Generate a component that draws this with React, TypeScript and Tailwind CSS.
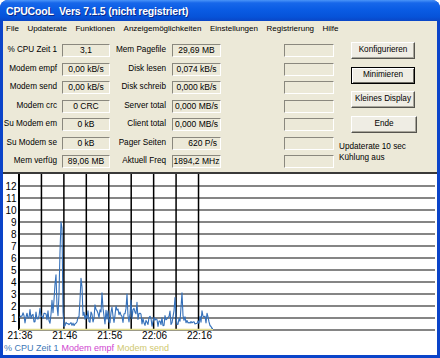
import React from "react";

function mulberry32(a: number) {
  return function () {
    a |= 0;
    a = (a + 0x6d2b79f5) | 0;
    let t = Math.imul(a ^ (a >>> 15), 1 | a);
    t = (t + Math.imul(t ^ (t >>> 7), 61 | t)) ^ t;
    return ((t ^ (t >>> 14)) >>> 0) / 4294967296;
  };
}

const rows: [string, string, string, string, boolean?][] = [
  ["% CPU Zeit 1", "3,1", "Mem Pagefile", "29,69 MB"],
  ["Modem empf", "0,00 kB/s", "Disk lesen", "0,074 kB/s"],
  ["Modem send", "0,00 kB/s", "Disk schreib", "0,000 kB/s"],
  ["Modem crc", "0 CRC", "Server total", "0,000 MB/s"],
  ["Su Modem em", "0 kB", "Client total", "0,000 MB/s"],
  ["Su Modem se", "0 kB", "Pager Seiten", "620 P/s", true],
  ["Mem verfüg", "89,06 MB", "Aktuell Freq", "1894,2 MHz"],
];

const menu = ["File", "Updaterate", "Funktionen", "Anzeigemöglichkeiten", "Einstellungen", "Registrierung", "Hilfe"];

const spikes: Record<number, number> = {
  24: 1.2, 27: 1.4, 30: 1.7, 33: 1.3, 36: 1.5, 40: 1.8, 44: 1.4, 48: 1.6,
  54: 2.5, 55: 3.8, 56: 4.6, 57: 2, 58: 1.2, 59: 3, 60: 6.5, 61: 9, 62: 8.5, 63: 1.5, 64: 0.3,
  80: 2.5, 81: 4.3, 82: 3.6, 83: 1.2, 88: 1.6, 91: 1.5, 95: 2.1, 98: 1.4, 101: 1.5, 102: 3.1, 103: 1.8,
  108: 1.6, 112: 1.9, 116: 2, 120: 1.5,
  126: 1.8, 127: 3, 128: 1.2, 131: 2.5, 134: 1.8, 137: 2.3, 140: 1.4, 174: 1.6, 175: 2.7, 176: 1.1, 181: 1.9, 182: 3.1, 183: 1.2,
  202: 1.6, 207: 1.4,
};

function buildData(): string {
  const rand = mulberry32(11);
  const pts: string[] = [];
  for (let ax = 19; ax <= 213; ax++) {
    let base: number;
    if (ax < 52) base = 0.5 + rand() * 1.1;
    else if (ax < 63) base = 1 + rand() * 1.5;
    else if (ax < 78) base = 0.35 + rand() * 0.35;
    else if (ax < 142) base = 0.5 + rand() * 1.3;
    else if (ax < 170) base = 0.3 + rand() * 0.9;
    else if (ax < 186) base = 0.4 + rand() * 1.2;
    else if (ax < 200) base = 0.5 + rand() * 0.3;
    else if (ax < 210) base = 0.5 + rand() * 0.8;
    else base = Math.max(0, (213 - ax) * 0.12 + rand() * 0.15);
    const v = spikes[ax] ?? base;
    pts.push(`${ax - 3},${(156 - 12 * v).toFixed(1)}`);
  }
  return pts.join(" ");
}

const data = buildData();

function Box({ w, children, right }: { w: string; children?: React.ReactNode; right?: boolean }) {
  return (
    <div
      className={`${w} h-[13px] border border-t-[#8a887e] border-l-[#8a887e] border-r-white border-b-white flex items-center ${
        right ? "justify-end pr-[3px]" : "justify-center"
      } text-[8.5px] leading-none whitespace-nowrap`}
    >
      {children}
    </div>
  );
}

export default function App() {
  const vlines = Array.from({ length: 9 }, (_, k) => 16 + 22.44 * k);
  const hlines = Array.from({ length: 13 }, (_, v) => 156 - 12 * v);
  const xlabels = ["21:36", "21:46", "21:56", "22:06", "22:16"];
  return (
    <div className="w-[440px] h-[358px] flex flex-col bg-[#0b44c9] rounded-t-[8px] overflow-hidden font-['Liberation_Sans',Arial,sans-serif] text-black">
      <div className="h-[21px] shrink-0 flex items-center pl-[6px] pt-[3px] bg-[linear-gradient(180deg,#4a94f8_0%,#1767ea_14%,#0a5ce4_45%,#0653d9_80%,#0a46c6_100%)]">
        <span className="text-white font-bold text-[10.5px] tracking-[-0.2px] [text-shadow:1px_1px_0_#0b2a8a]">
          CPUCooL&nbsp;&nbsp;Vers 7.1.5 (nicht registriert)
        </span>
      </div>
      <div className="flex-1 flex flex-col mx-[3px] mb-[3px] bg-[#ece9d8]">
        <div className="h-[16px] shrink-0 flex items-center gap-[8.5px] pl-[3px] text-[8px]">
          {menu.map((m) => (
            <span key={m}>{m}</span>
          ))}
        </div>
        <div className="h-[135px] shrink-0 flex items-start pt-[5px]">
          <div className="mt-[2px] flex flex-col gap-[5.5px]">
            {rows.map(([l1, v1, l2, v2, r]) => (
              <div key={l1} className="flex items-center h-[13px] text-[8.2px] leading-none">
                <div className="w-[54px] text-right whitespace-nowrap">{l1}</div>
                <div className="ml-[5px]">
                  <Box w="w-[48px]">{v1}</Box>
                </div>
                <div className="w-[56px] text-right whitespace-nowrap">{l2}</div>
                <div className="ml-[6px]">
                  <Box w="w-[49px]" right={r}>{v2}</Box>
                </div>
                <div className="ml-[63px]">
                  <Box w="w-[50px]" />
                </div>
              </div>
            ))}
          </div>
          <div className="ml-[5px] flex flex-col">
            <div className="ml-[12px] flex flex-col gap-[7.5px]">
              <button className="w-[64px] h-[17px] bg-[#efede4] border border-t-white border-l-white border-r-[#55544e] border-b-[#55544e] shadow-[inset_-1px_-1px_0_#a8a69b] text-[8.2px] leading-none flex items-center justify-center">
                Konfigurieren
              </button>
              <button className="w-[64px] h-[17px] bg-[#efede4] border border-black shadow-[inset_1px_1px_0_#fff,inset_-1px_-1px_0_#6f6e66] text-[8.2px] leading-none flex items-center justify-center">
                Minimieren
              </button>
              <button className="w-[64px] h-[17px] bg-[#efede4] border border-t-white border-l-white border-r-[#55544e] border-b-[#55544e] shadow-[inset_-1px_-1px_0_#a8a69b] text-[8.2px] leading-none flex items-center justify-center">
                Kleines Display
              </button>
              <button className="w-[66px] h-[17px] bg-[#efede4] border border-t-white border-l-white border-r-[#55544e] border-b-[#55544e] shadow-[inset_-1px_-1px_0_#a8a69b] text-[8.2px] leading-none flex items-center justify-center">
                Ende
              </button>
            </div>
            <div className="mt-[8px] text-[8.2px] leading-[11px]">
              <div>Updaterate 10 sec</div>
              <div>Kühlung aus</div>
            </div>
          </div>
        </div>
        <div className="flex-1 flex flex-col bg-white border-t-2 border-[#3a3a3a]">
          <svg width="434" height="168" className="block shrink-0">
            {hlines.map((y, i) => (
              <line key={"h" + i} x1={16} x2={432} y1={y} y2={y} stroke="#858585" strokeWidth={2} />
            ))}
            {vlines.map((x, i) => (
              <line key={"v" + i} x1={x} x2={x} y1={0} y2={156} stroke="#000" strokeWidth={i === 0 ? 2 : 1.5} />
            ))}
            <line x1={16} x2={210} y1={155.5} y2={155.5} stroke="#e2dc8c" strokeWidth={1.5} />
            <polyline points={data} fill="none" stroke="#3470ba" strokeWidth={1.1} strokeLinejoin="round" />
            {Array.from({ length: 12 }, (_, i) => i + 1).map((v) => (
              <text
                key={"y" + v}
                x={13.5}
                y={156 - 12 * v + 3.6}
                textAnchor="end"
                fontSize={10}
                fontFamily="Liberation Sans, Arial, sans-serif"
                fill="#000"
              >
                {v}
              </text>
            ))}
            {xlabels.map((t, k) => (
              <text
                key={t}
                x={17 + 44.88 * k}
                y={165}
                textAnchor="middle"
                fontSize={10}
                fontFamily="Liberation Sans, Arial, sans-serif"
                fill="#000"
              >
                {t}
              </text>
            ))}
          </svg>
          <div className="h-[13px] flex items-center gap-[3px] pl-[1px] text-[9px] leading-none">
            <span className="text-[#3d78b6]">% CPU Zeit 1</span>
            <span className="text-[#cf45cf]">Modem empf</span>
            <span className="text-[#cfc870]">Modem send</span>
          </div>
        </div>
      </div>
    </div>
  );
}
